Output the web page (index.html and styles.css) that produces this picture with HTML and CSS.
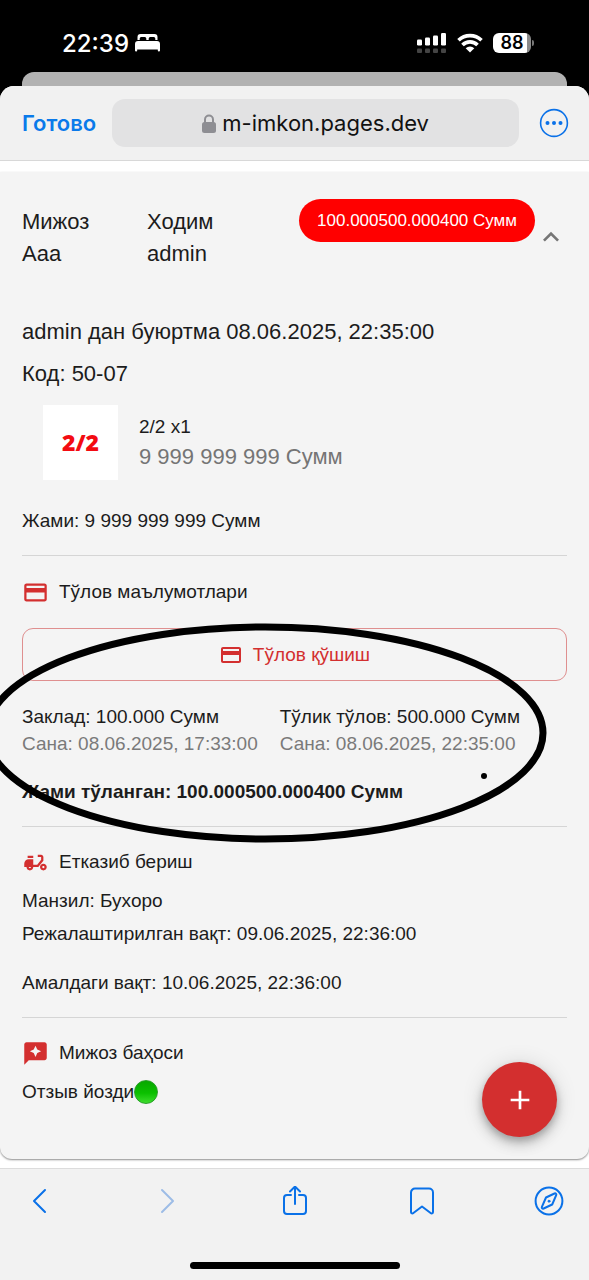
FILE: index.html
```html
<!DOCTYPE html>
<html lang="uz-Cyrl">
<head>
<meta charset="utf-8">
<meta name="viewport" content="width=device-width, initial-scale=1">
<title>m-imkon.pages.dev</title>
<link rel="stylesheet" href="styles.css">
</head>
<body>
<div class="phone">
  <div class="status">
    <div class="status-side">
      <span class="clock">22:39</span>
      <svg width="25" height="18" viewBox="0 0 25 18" fill="#fff"><path d="M2.500 6V3a3 3 0 0 1 3-3h14a3 3 0 0 1 3 3v3h-2.200V4.500a1.500 1.500 0 0 0-1.500-1.500h-3.600a1.500 1.500 0 0 0-1.500 1.500V6h-2.400V4.500A1.500 1.500 0 0 0 9.800 3H6.200a1.500 1.500 0 0 0-1.500 1.500V6z"/><path d="M0 10a3 3 0 0 1 3-3h19a3 3 0 0 1 3 3v6.500a1 1 0 0 1-2.200 0V15.500H2.200v1a1 1 0 0 1-2.200 0z"/></svg>
    </div>
    <div class="status-side status-right">
      <svg width="30" height="20" viewBox="0 0 30 20"><g fill="#fff"><rect x="0" y="6.500" width="5" height="6" rx="1.200"/><rect x="8" y="4.500" width="5" height="8" rx="1.200"/><rect x="16" y="2.500" width="5" height="10" rx="1.200"/><rect x="24" y="0" width="5" height="12.500" rx="1.200"/></g><g fill="#444"><rect x="0" y="15.500" width="5" height="4.500" rx="1"/><rect x="8" y="15.500" width="5" height="4.500" rx="1"/><rect x="16" y="15.500" width="5" height="4.500" rx="1"/><rect x="24" y="15.500" width="5" height="4.500" rx="1"/></g></svg>
      <svg width="26" height="20" viewBox="0 0 26 20" fill="none" stroke="#fff" stroke-width="3.600"><path d="M1.500 7.300a16.500 16.500 0 0 1 23 0"/><path d="M5.500 12a10.500 10.500 0 0 1 15 0"/><path d="M13 19.500l-4.300-4.300a6 6 0 0 1 8.600 0z" fill="#fff" stroke="none"/></svg>
      <span class="battery">88</span>
    </div>
  </div>
  <div class="under-sheet"></div>
  <div class="sheet">
    <header class="browser-bar">
      <button class="done">Готово</button>
      <div class="address">
        <svg width="14" height="19" viewBox="0 0 14 19"><path d="M3 9V5.500a4 4 0 0 1 8 0V9" fill="none" stroke="#8e8e93" stroke-width="2"/><rect x="0" y="8" width="14" height="11" rx="2.500" fill="#8e8e93"/></svg>
        <span>m-imkon.pages.dev</span>
      </div>
      <button class="icon-btn" aria-label="Menu"><svg width="30" height="30" viewBox="0 0 30 30"><circle cx="15" cy="15" r="13.400" fill="none" stroke="#0a71e8" stroke-width="1.600"/><g fill="#0a71e8"><circle cx="8.500" cy="15" r="2"/><circle cx="15" cy="15" r="2"/><circle cx="21.500" cy="15" r="2"/></g></svg></button>
    </header>

    <main class="card">
      <div class="summary">
        <div class="party"><div>Мижоз</div><div>Aaa</div></div>
        <div class="party"><div>Ходим</div><div>admin</div></div>
        <span class="chip">100.000500.000400 Сумм</span>
        <button class="toggle" aria-label="Collapse"><svg width="32" height="32" viewBox="0 0 24 24" fill="#757575"><path d="M12 8l-6 6 1.410 1.410L12 10.830l4.590 4.580L18 14z"/></svg></button>
      </div>

      <section class="order">
        <h1 class="line-lg">admin дан буюртма 08.06.2025, 22:35:00</h1>
        <p class="line-lg">Код: 50-07</p>
        <div class="item">
          <div class="thumb">2/2</div>
          <div>
            <div class="item-name">2/2 x1</div>
            <div class="item-price">9 999 999 999 Сумм</div>
          </div>
        </div>
        <p class="line">Жами: 9 999 999 999 Сумм</p>
      </section>

      <section class="block payment">
        <h2 class="block-title"><svg width="27" height="27" viewBox="0 0 24 24"><path d="M20 4H4c-1.110 0-1.990.89-1.990 2L2 18c0 1.110.89 2 2 2h16c1.110 0 2-.89 2-2V6c0-1.110-.89-2-2-2m0 14H4v-6h16zm0-10H4V6h16z"/></svg>Тўлов маълумотлари</h2>
        <button class="add-pay"><svg width="24" height="24" viewBox="0 0 24 24"><path d="M20 4H4c-1.110 0-1.990.89-1.990 2L2 18c0 1.110.89 2 2 2h16c1.110 0 2-.89 2-2V6c0-1.110-.89-2-2-2m0 14H4v-6h16zm0-10H4V6h16z"/></svg>Тўлов қўшиш</button>
        <div class="payments">
          <div><div>Заклад: 100.000 Сумм</div><div class="muted">Сана: 08.06.2025, 17:33:00</div></div>
          <div><div>Тўлик тўлов: 500.000 Сумм</div><div class="muted">Сана: 08.06.2025, 22:35:00</div></div>
        </div>
        <p class="line total">Жами тўланган: 100.000500.000400 Сумм</p>
        <svg class="marker" width="570" height="224" viewBox="0 0 570 224"><ellipse cx="285" cy="112" rx="278" ry="106" fill="none" stroke="#000" stroke-width="7"/><circle cx="504" cy="155" r="3"/></svg>
      </section>

      <section class="block">
        <h2 class="block-title"><svg width="27" height="27" viewBox="0 0 24 24"><path d="M19 7c0-1.100-.9-2-2-2h-3v2h3v2.650L13.520 14H10V9H6c-2.210 0-4 1.790-4 4v3h2c0 1.660 1.340 3 3 3s3-1.340 3-3h4.480L19 10.350zM7 17c-.55 0-1-.45-1-1h2c0 .55-.45 1-1 1"/><path d="M5 6h5v2H5zm14 7c-1.660 0-3 1.340-3 3s1.340 3 3 3 3-1.340 3-3-1.340-3-3-3m0 4c-.55 0-1-.45-1-1s.45-1 1-1 1 .45 1 1-.45 1-1 1"/></svg>Етказиб бериш</h2>
        <p class="line">Манзил: Бухоро</p>
        <p class="line planned">Режалаштирилган вақт: 09.06.2025, 22:36:00</p>
        <p class="line actual">Амалдаги вақт: 10.06.2025, 22:36:00</p>
      </section>

      <section class="block">
        <h2 class="block-title"><svg width="27" height="27" viewBox="0 0 24 24"><path d="M20 2H4c-1.100 0-2 .9-2 2v18l4-4h14c1.100 0 2-.9 2-2V4c0-1.100-.9-2-2-2m-6.430 9.570L12 15l-1.570-3.430L7 10l3.430-1.570L12 5l1.570 3.430L17 10z"/></svg>Мижоз баҳоси</h2>
        <p class="line review">Отзыв йозди<span class="dot"></span></p>
      </section>
    </main>
    <button class="fab" aria-label="Add"><svg width="32" height="32" viewBox="0 0 24 24" fill="#fff"><path d="M19 13h-6v6h-2v-6H5v-2h6V5h2v6h6z"/></svg></button>
  </div>

  <footer class="toolbar">
    <nav class="tools">
      <button aria-label="Back"><svg width="30" height="30" viewBox="0 0 30 30"><path d="M20 4L9 15l11 11" stroke-width="2"/></svg></button>
      <button aria-label="Forward" disabled><svg width="30" height="30" viewBox="0 0 30 30"><path d="M10 4l11 11-11 11" stroke-width="2"/></svg></button>
      <button aria-label="Share"><svg width="30" height="30" viewBox="0 0 30 30"><path d="M11 9H7a3 3 0 0 0-3 3v13a3 3 0 0 0 3 3h16a3 3 0 0 0 3-3V12a3 3 0 0 0-3-3h-4M15 18V0.800M10 5.500l5-5 5 5"/></svg></button>
      <button aria-label="Bookmarks"><svg width="30" height="30" viewBox="0 0 30 30"><path d="M4 6.500a4 4 0 0 1 4-4h14a4 4 0 0 1 4 4V26c0 1.500-1.400 1.900-2.400 1L15 20.500 6.400 27C5.400 27.900 4 27.500 4 26z"/></svg></button>
      <button aria-label="Open in Safari"><svg width="30" height="30" viewBox="0 0 30 30"><circle cx="15" cy="15" r="13.400"/><path d="M12 11.500l8.500-4c1.200-.5 2.200.4 1.700 1.600l-4 9.400-8.600 4c-1.200.5-2.200-.4-1.700-1.600z"/><circle cx="15" cy="15.200" r="1" fill="#0a71e8" stroke-width="1"/></svg></button>
    </nav>
    <div class="home"></div>
  </footer>
</div>
</body>
</html>
```
FILE: styles.css
```css
* { box-sizing: border-box; }
body {
  margin: 0;
  background: #000;
  color: #1c1c1c;
  font-family: "Liberation Sans", Arial, sans-serif;
}
h1, h2, p { margin: 0; font-weight: 400; }
button {
  border: 0;
  padding: 0;
  background: none;
  font: inherit;
  color: inherit;
}
svg { display: block; flex: none; }

.phone {
  position: relative;
  display: flex;
  flex-direction: column;
  min-height: 100vh;
  overflow: hidden;
  font-size: 19px;
}

/* Status bar */
.status {
  display: flex;
  justify-content: space-between;
  align-items: flex-end;
  height: 72px;
  padding: 0 58px 14px 62px;
  color: #fff;
  font-family: Inter, sans-serif;
}
.status-side { display: flex; align-items: center; gap: 6px; height: 30px; }
.status-right { gap: 10px; }
.clock { font-size: 24px; font-weight: 500; }
.battery {
  position: relative;
  width: 38px;
  height: 20px;
  border-radius: 6px;
  background: linear-gradient(90deg, #fff 34px, #8a8a8a 34px);
  color: #000;
  font-size: 18px;
  font-weight: 600;
  line-height: 20px;
  text-align: center;
}
.battery::after {
  content: "";
  position: absolute;
  left: 39px;
  top: 7px;
  width: 2px;
  height: 6px;
  border-radius: 0 2px 2px 0;
  background: #777;
}
.under-sheet {
  height: 14px;
  margin: 0 22px;
  border-radius: 12px 12px 0 0;
  background: #b2b2b2;
}

/* Browser sheet */
.sheet {
  position: relative;
  flex: 1;
  padding-bottom: 9px;
  border-radius: 14px 14px 0 0;
  background: #fff;
}
.browser-bar {
  display: flex;
  align-items: center;
  gap: 16px;
  height: 75px;
  padding: 0 20px 0 22px;
  border-bottom: 1px solid #d8d8d8;
  border-radius: 14px 14px 0 0;
  background: #f1f1f1;
  font-family: Inter, sans-serif;
}
.done { color: #0a7aea; font-size: 22px; font-weight: 600; }
.address {
  flex: 1;
  display: flex;
  justify-content: center;
  align-items: center;
  gap: 6px;
  height: 48px;
  border-radius: 13px;
  background: #e2e2e3;
  color: #111;
  font-size: 22px;
}
.icon-btn { margin-left: 4px; }

/* Order card */
.card {
  margin-top: 11px;
  padding: 27px 22px 33px;
  border-radius: 0 0 12px 12px;
  background: #f4f4f4;
  box-shadow: 0 1px 2px rgba(0, 0, 0, .45);
}
.summary {
  display: flex;
  align-items: flex-start;
  font-size: 22px;
  line-height: 32px;
}
.party { width: 125px; padding-top: 7px; }
.chip {
  margin-left: auto;
  padding: 0 18px;
  border-radius: 22px;
  background: #f00;
  color: #fff;
  font-size: 17px;
  line-height: 43px;
  white-space: nowrap;
}
.toggle { padding-top: 22px; }

.order { padding: 46px 0 20px; }
.line-lg { font-size: 22px; line-height: 32px; }
.line-lg + .line-lg { margin-top: 10px; }
.item { display: flex; align-items: center; gap: 21px; margin: 15px 21px 27px; }
.thumb {
  width: 75px;
  background: #fff;
  color: #f30b12;
  font-family: "Open Sans", sans-serif;
  font-size: 23px;
  font-weight: 800;
  line-height: 75px;
  text-align: center;
}
.item-name { line-height: 28px; }
.item-price { color: #757575; font-size: 22px; line-height: 32px; }
.line { line-height: 28px; }

.block {
  position: relative;
  padding: 21px 0 20px;
  border-top: 1px solid #d5d5d5;
}
.block-title {
  display: flex;
  align-items: center;
  gap: 10px;
  margin-bottom: 11px;
  font-size: 19px;
  line-height: 28px;
}
.block-title svg { fill: #d32f2f; }
.payment { z-index: 1; padding-top: 22px; }
.payment .block-title { margin-bottom: 22px; }
.add-pay {
  display: flex;
  justify-content: center;
  align-items: center;
  gap: 10px;
  width: 100%;
  height: 53px;
  margin-bottom: 22px;
  border: 1px solid #df8f8f;
  border-radius: 11px;
  color: #d32f2f;
}
.add-pay svg { fill: #d32f2f; }
.payments {
  display: grid;
  grid-template-columns: max-content max-content;
  gap: 22px;
  margin-bottom: 21px;
  line-height: 27px;
}
.muted { color: #7a7a7a; }
.total { font-weight: 700; }
.marker { position: absolute; left: -42px; top: 65px; pointer-events: none; }
.planned { margin-top: 5px; }
.actual { margin-top: 21px; }
.review { display: flex; align-items: center; }
.dot {
  width: 24px;
  height: 24px;
  border: 1px solid #2a9f2a;
  border-radius: 50%;
  background: linear-gradient(#07a800, #0bc000 55%, #3ddc2c);
}
.fab {
  position: absolute;
  right: 32px;
  bottom: 31px;
  z-index: 2;
  display: grid;
  place-items: center;
  width: 75px;
  height: 75px;
  border-radius: 50%;
  background: #d32f2f;
  box-shadow: 0 4px 7px rgba(0, 0, 0, .2), 0 8px 13px rgba(0, 0, 0, .14), 0 1px 22px rgba(0, 0, 0, .12);
}

/* Bottom toolbar */
.toolbar {
  display: flex;
  flex-direction: column;
  justify-content: space-between;
  align-items: center;
  height: 112px;
  padding: 17px 25px 11px;
  border-top: 1px solid #dcdcdc;
  background: #f2f2f2;
}
.tools { display: flex; justify-content: space-between; width: 100%; }
.tools svg {
  fill: none;
  stroke: #0a71e8;
  stroke-width: 2;
  stroke-linecap: round;
  stroke-linejoin: round;
}
.tools button:disabled svg { stroke: #9dbce6; }
.home { width: 210px; height: 7px; border-radius: 4px; background: #000; }
```
